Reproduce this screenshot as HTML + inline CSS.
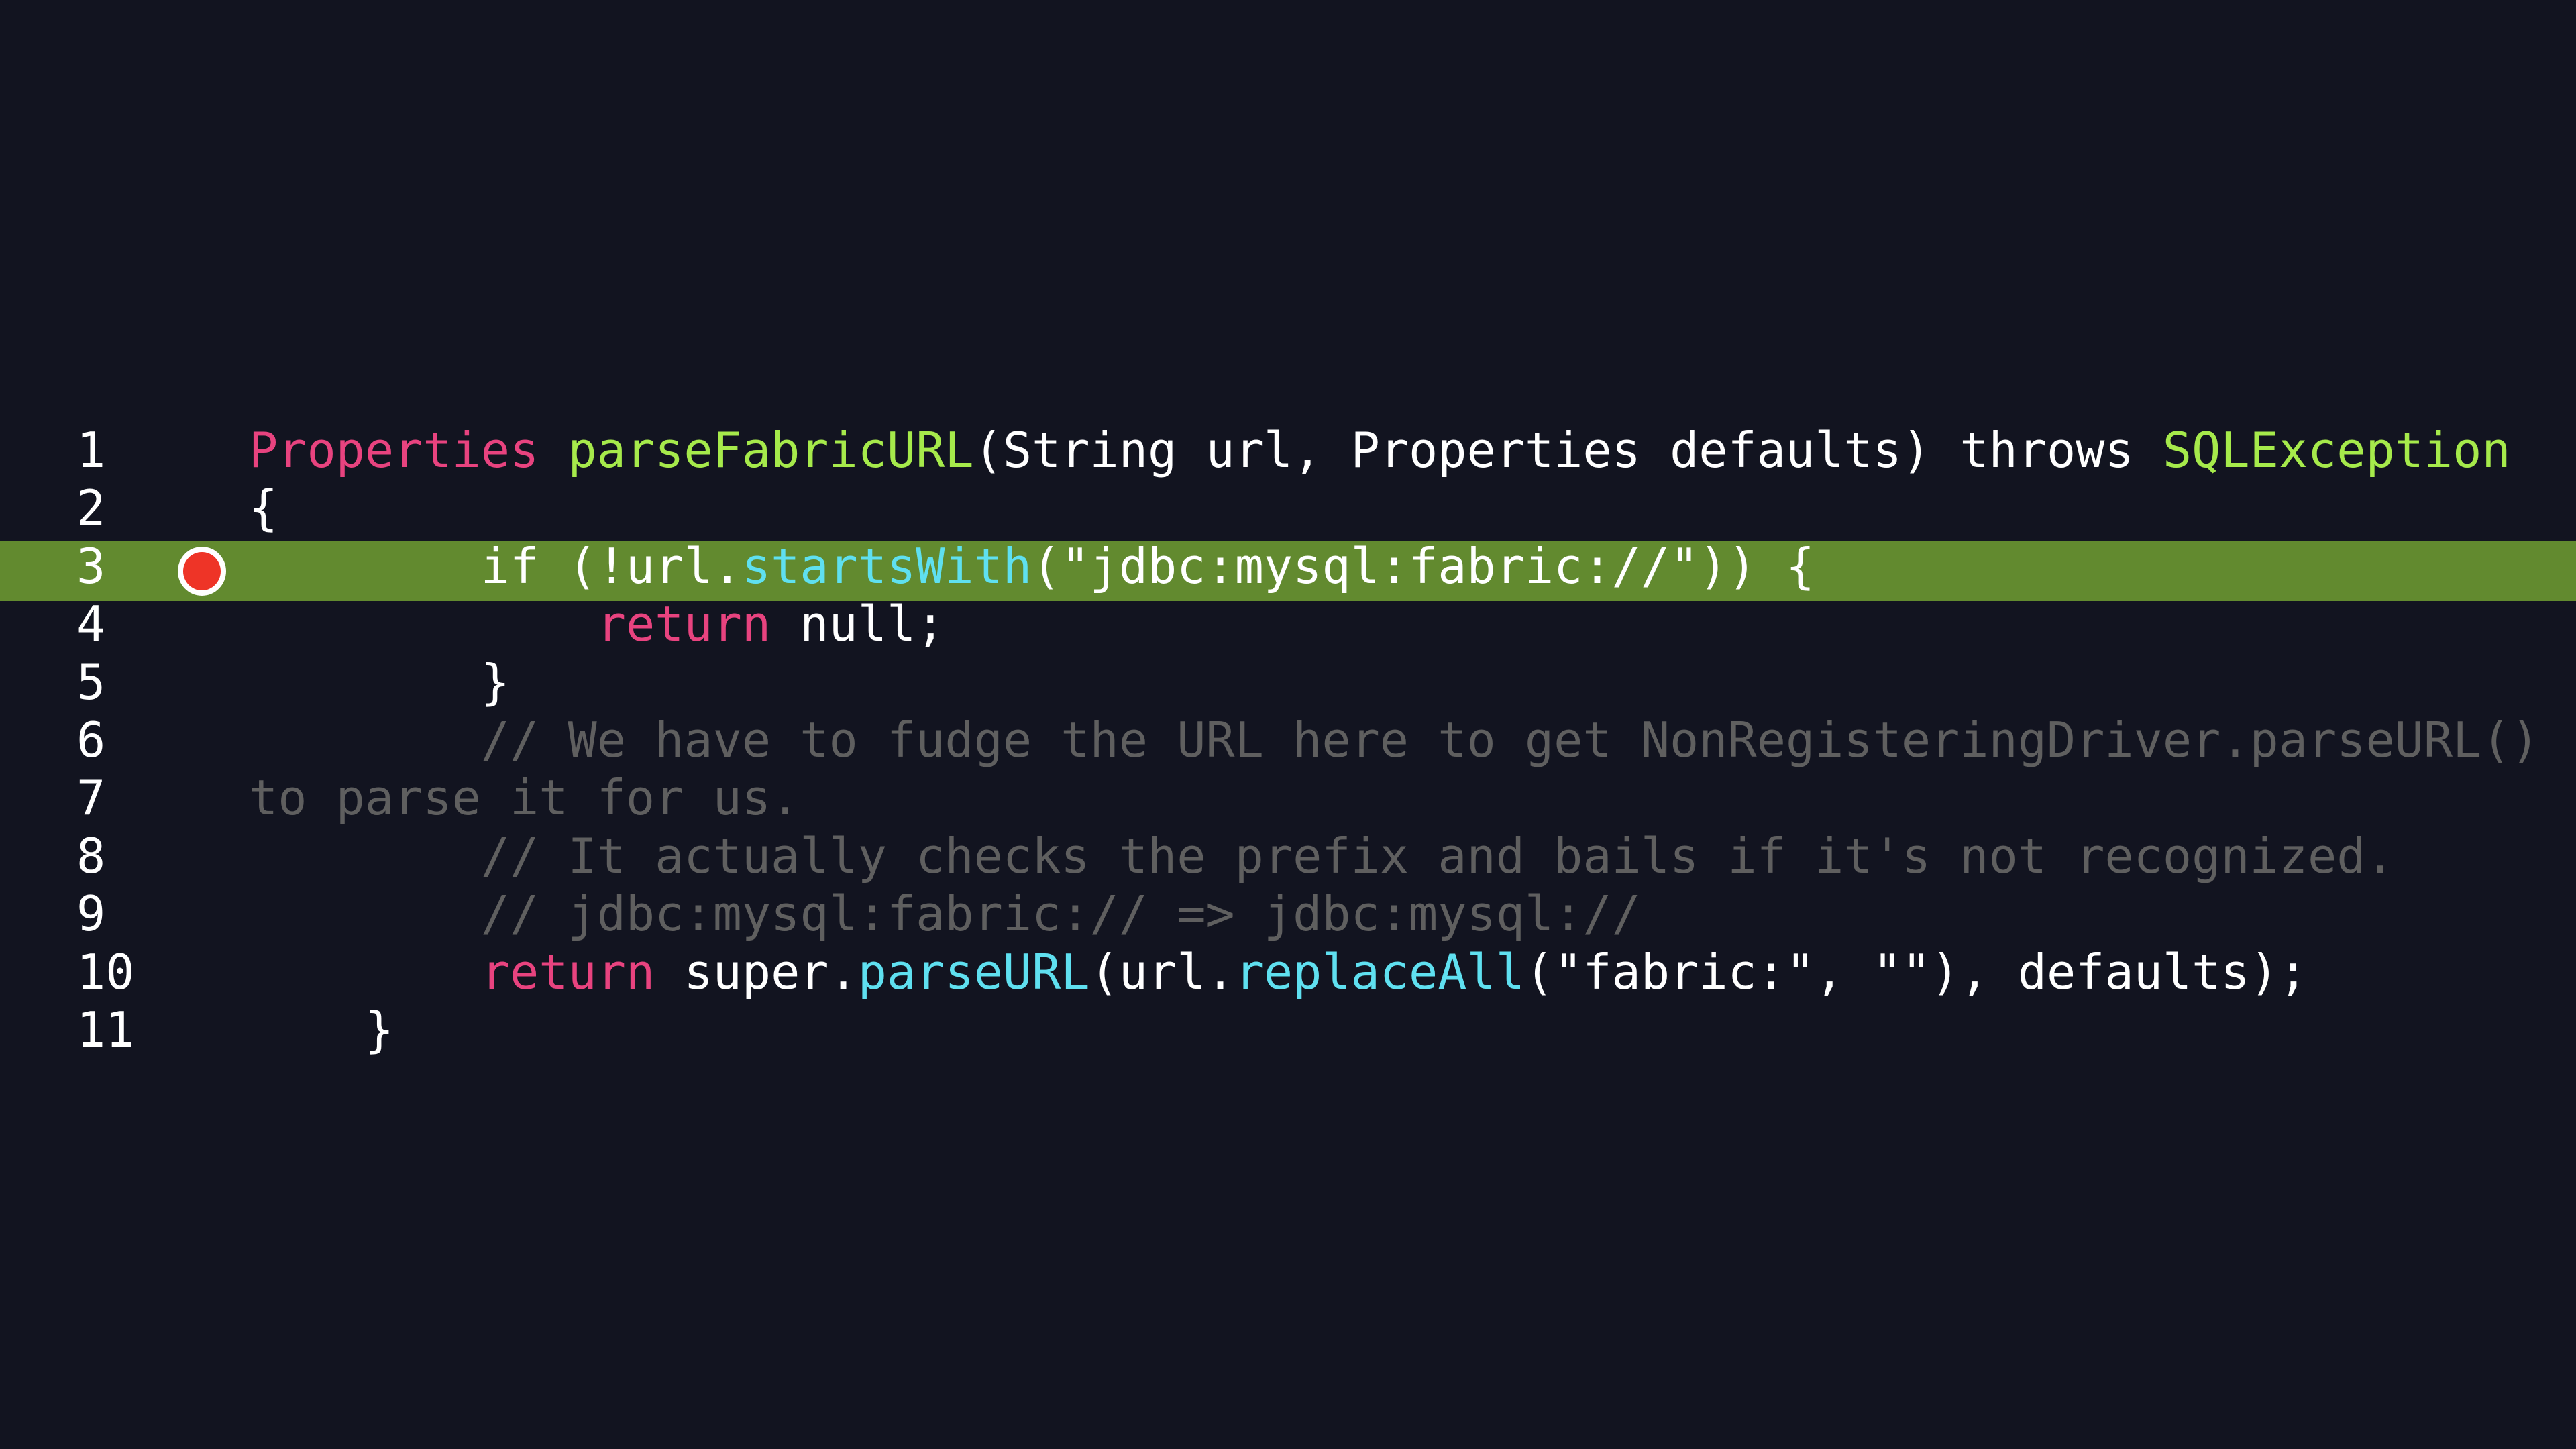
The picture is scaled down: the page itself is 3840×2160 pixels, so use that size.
<!DOCTYPE html>
<html><head><meta charset="utf-8"><style>
html,body{margin:0;padding:0;background:#121420;width:3840px;height:2160px;overflow:hidden}
.band{position:absolute;left:0;top:807px;width:3840px;height:89px;background:#628a2f}
.bp{position:absolute;left:265px;top:815px;width:56px;height:57px;border:8px solid #fff;border-radius:50%;background:#ee3427}
.l{position:absolute;left:0;height:86.4px;line-height:86.4px;font-family:"DejaVu Sans Mono","Liberation Mono",monospace;font-size:71.8px;color:#fff;white-space:pre}
.n{position:absolute;left:114px}
.c{position:absolute;left:371px}
.k{color:#e8437f}.g{color:#a6ea4b}.f{color:#5fe0f0}.m{color:#5f5f5f}
</style></head><body>
<div class="band"></div>
<div class="bp"></div>
<div class="l" style="top:628px"><span class="n">1</span><span class="c"><span class="k">Properties</span> <span class="g">parseFabricURL</span>(String url, Properties defaults) throws <span class="g">SQLException</span></span></div>
<div class="l" style="top:714.4px"><span class="n">2</span><span class="c">{</span></div>
<div class="l" style="top:800.8px"><span class="n">3</span><span class="c">        if (!url.<span class="f">startsWith</span>("jdbc:mysql:fabric://")) {</span></div>
<div class="l" style="top:887.2px"><span class="n">4</span><span class="c">            <span class="k">return</span> null;</span></div>
<div class="l" style="top:973.6px"><span class="n">5</span><span class="c">        }</span></div>
<div class="l" style="top:1060px"><span class="n">6</span><span class="c m">        // We have to fudge the URL here to get NonRegisteringDriver.parseURL()</span></div>
<div class="l" style="top:1146.4px"><span class="n">7</span><span class="c m">to parse it for us.</span></div>
<div class="l" style="top:1232.8px"><span class="n">8</span><span class="c m">        // It actually checks the prefix and bails if it's not recognized.</span></div>
<div class="l" style="top:1319.2px"><span class="n">9</span><span class="c m">        // jdbc:mysql:fabric:// =&gt; jdbc:mysql://</span></div>
<div class="l" style="top:1405.6px"><span class="n">10</span><span class="c">        <span class="k">return</span> super.<span class="f">parseURL</span>(url.<span class="f">replaceAll</span>("fabric:", ""), defaults);</span></div>
<div class="l" style="top:1492px"><span class="n">11</span><span class="c">    }</span></div>
</body></html>
